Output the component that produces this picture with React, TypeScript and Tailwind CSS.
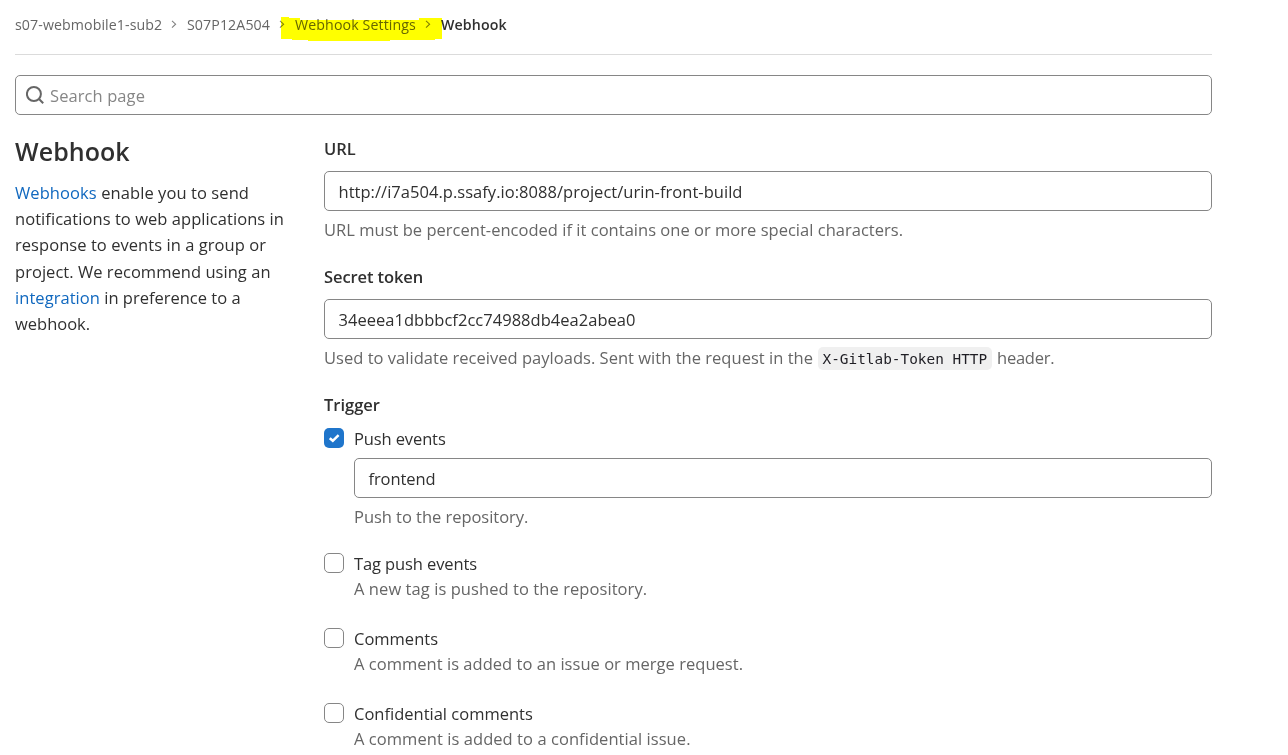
import type { ReactNode } from "react";

function Chevron() {
  return (
    <svg className="ml-[9px] mr-[10px] h-[9px] w-[6px] shrink-0" viewBox="0 0 6 9" fill="none" stroke="#808080" strokeWidth="1.1">
      <path d="M1 0.8l3.6 3.4L1 7.6" />
    </svg>
  );
}

function Marker() {
  return (
    <svg className="pointer-events-none absolute left-[281px] top-[17px] h-6 w-[161px] mix-blend-multiply" viewBox="0 0 161 24" fill="#ffff00">
      <path d="M0 0H8V1H19V3H138V1H161V22H154V23H109V24H27V23H11V22H0Z" />
    </svg>
  );
}

function Label({ className = "", children }: { className?: string; children: ReactNode }) {
  return <div className={`h-[26px] font-semibold leading-[26px] ${className}`}>{children}</div>;
}

function Field({ className = "", children }: { className?: string; children: ReactNode }) {
  return (
    <div className={`flex h-10 items-center rounded-[5px] border border-[#868686] bg-white pl-[13.5px] pt-px leading-[26px] ${className}`}>
      {children}
    </div>
  );
}

function Help({ className = "", children }: { className?: string; children: ReactNode }) {
  return <div className={`mt-[6px] h-[26px] whitespace-pre leading-[26px] text-[#666] ${className}`}>{children}</div>;
}

function Box({ checked = false }: { checked?: boolean }) {
  return checked ? (
    <span className="flex size-5 shrink-0 items-center justify-center rounded-[5px] bg-[#1f75cb]">
      <svg className="h-[9px] w-[11px]" viewBox="0 0 11 9" fill="none" stroke="#fff" strokeWidth="2.5">
        <path d="M0.8 4.2L3.8 6.8L9.6 1.2" />
      </svg>
    </span>
  ) : (
    <span className="size-5 shrink-0 rounded-[5px] border border-[#868686] bg-white" />
  );
}

function Option({ label, help, labelClass = "", helpClass = "" }: { label: string; help: string; labelClass?: string; helpClass?: string }) {
  return (
    <div className="flex h-[75px] gap-[10px]">
      <Box />
      <div className="whitespace-nowrap leading-[22px]">
        <div className={`h-[25px] ${labelClass}`}>{label}</div>
        <div className={`text-[#666] ${helpClass}`}>{help}</div>
      </div>
    </div>
  );
}

export default function App() {
  return (
    <div className="relative h-[755px] w-[1288px] overflow-hidden bg-white pl-[15px] pr-[76px] font-['Open_Sans',sans-serif] text-[16.5px] text-[#303030]">
      <nav className="flex h-[55px] items-center whitespace-nowrap border-b border-[#dbdbdb] pb-[5px] text-[14.2px] text-[#666]">
        <span className="w-[147px] tracking-[0.09px]">s07-webmobile1-sub2</span>
        <Chevron />
        <span className="w-[83px] tracking-[0.092px]">S07P12A504</span>
        <Chevron />
        <span className="w-[121px] tracking-[0.108px]">Webhook Settings</span>
        <Chevron />
        <span className="font-semibold tracking-[0.12px] text-[#303030]">Webhook</span>
      </nav>
      <Marker />
      <div className="mt-5 flex h-10 items-center rounded-[5px] border border-[#868686] pl-[10px]">
        <svg className="size-[19px] shrink-0" viewBox="0 0 19 19" fill="none" stroke="#666" strokeWidth="2">
          <circle cx="7.9" cy="8" r="7" />
          <path d="M12.8 12.8L17.2 17.2" />
        </svg>
        <span className="ml-[5px] pt-[3px] tracking-[0.088px] text-[#868686]">Search page</span>
      </div>
      <main className="flex">
        <section className="w-[309px] shrink-0 pt-[18px]">
          <h1 className="h-[37px] text-[25px] font-semibold leading-[37px] tracking-[0.06px]">Webhook</h1>
          <p className="mt-[10px] whitespace-nowrap leading-[26.2px]">
            <span className="tracking-[0.09px] text-[#1068bf]">Webhooks</span>
            <span className="tracking-[0.08px]"> enable you to send</span>
            <br />
            <span className="tracking-[0.057px]">notifications to web applications in</span>
            <br />
            <span className="tracking-[0.054px]">response to events in a group or</span>
            <br />
            <span className="tracking-[0.04px]">project. We recommend using an</span>
            <br />
            <span className="tracking-[0.05px] text-[#1068bf]">integration</span> in preference to a
            <br />
            webhook.
          </p>
        </section>
        <section className="flex-1 pt-[21px]">
          <Label>URL</Label>
          <Field className="mt-[9px] tracking-[0.034px]">http://i7a504.p.ssafy.io:8088/project/urin-front-build</Field>
          <Help className="tracking-[0.02px]">URL must be percent-encoded if it contains one or more special characters.</Help>
          <Label className="mt-[21px] tracking-[-0.1px]">Secret token</Label>
          <Field className="mt-[9px] tracking-[0.027px]">34eeea1dbbbcf2cc74988db4ea2abea0</Field>
          <Help className="flex items-center">
            <span className="tracking-[0.025px]">Used to validate received payloads. Sent with the request in the</span>
            <code className="ml-[5px] h-[23px] w-[174px] rounded-[5px] bg-[#f0f0f0] px-[4.5px] font-['DejaVu_Sans_Mono',monospace] text-[14.4px] leading-[24px] text-[#1f1e24]">X-Gitlab-Token HTTP</code>
            <span className="ml-[5px] tracking-[-0.25px]">header.</span>
          </Help>
          <Label className="mt-[21px]">Trigger</Label>
          <div className="mt-[10px] flex h-[125px] gap-[10px]">
            <Box checked />
            <div className="flex-1">
              <div className="h-[30px] leading-[22px] tracking-[-0.12px]">Push events</div>
              <Field className="tracking-[-0.088px]">frontend</Field>
              <Help className="tracking-[-0.04px]">Push to the repository.</Help>
            </div>
          </div>
          <Option label="Tag push events" help="A new tag is pushed to the repository." labelClass="tracking-[-0.11px]" helpClass="tracking-[0.07px]" />
          <Option label="Comments" help="A comment is added to an issue or merge request." helpClass="tracking-[0.031px]" />
          <Option label="Confidential comments" help="A comment is added to a confidential issue." helpClass="tracking-[0.06px]" />
        </section>
      </main>
    </div>
  );
}
